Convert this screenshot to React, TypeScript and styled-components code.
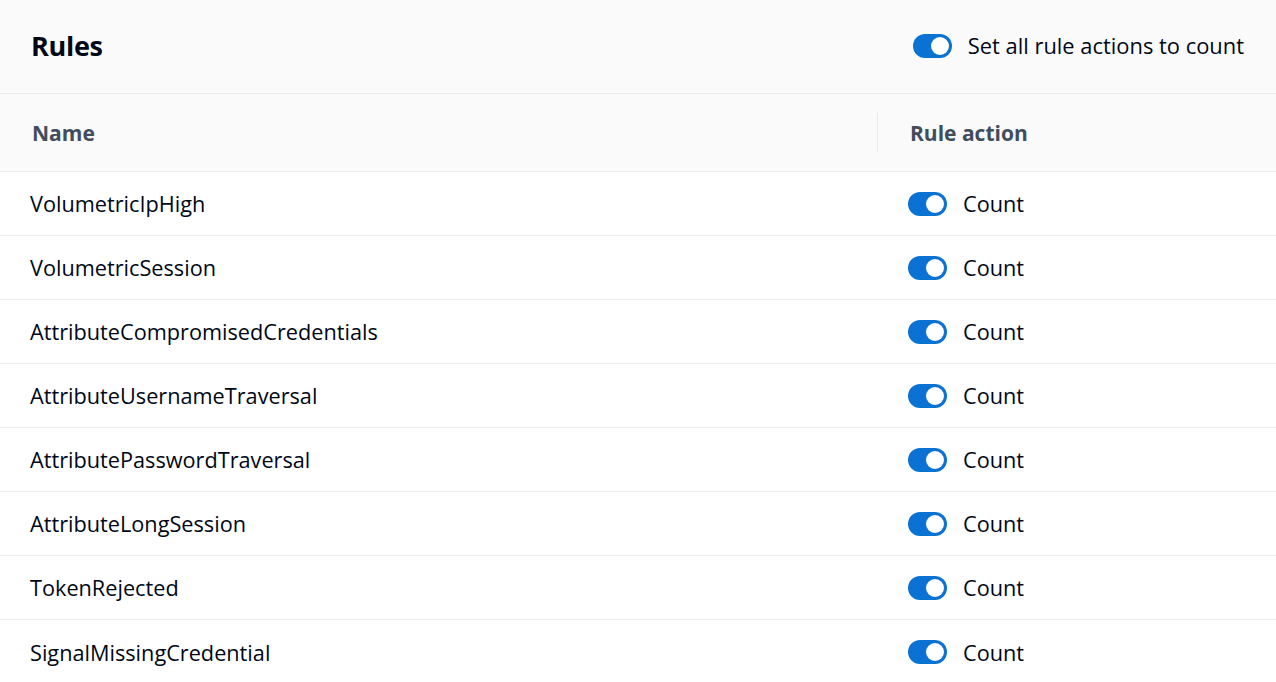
import React from "react";
import styled, { createGlobalStyle } from "styled-components";

const Global = createGlobalStyle`
  html, body { margin: 0; padding: 0; background: #ffffff; }
  body { font-family: "Open Sans", "Noto Sans", sans-serif; color: #000716; }
`;

const Panel = styled.div`
  width: 1276px;
  height: 682px;
  overflow: hidden;
  background: #ffffff;
`;

const Header = styled.div`
  height: 94px;
  box-sizing: border-box;
  background: #fafafa;
  border-bottom: 1px solid #e9ebed;
  display: flex;
  align-items: center;
  justify-content: space-between;
  padding: 0 32px 2px 31px;
`;

const Title = styled.h2`
  margin: 0;
  font-size: 27px;
  font-weight: 700;
  letter-spacing: -0.3px;
  color: #000716;
`;

const ToggleLabel = styled.label<{ $gap?: number; $size?: number }>`
  display: flex;
  align-items: center;
  gap: ${(p) => p.$gap ?? 16}px;
  font-size: ${(p) => p.$size ?? 21.7}px;
  color: #000716;
`;

const Track = styled.span`
  position: relative;
  display: inline-block;
  width: 39px;
  height: 24px;
  border-radius: 12px;
  background: #0972d3;
  flex-shrink: 0;
  &::after {
    content: "";
    position: absolute;
    top: 3px;
    right: 3px;
    width: 18px;
    height: 18px;
    border-radius: 50%;
    background: #ffffff;
  }
`;

const Table = styled.div`
  display: grid;
  grid-template-columns: 877px 1fr;
`;

const HeadCell = styled.div<{ $divider?: boolean }>`
  height: 78px;
  box-sizing: border-box;
  background: #fafafa;
  border-bottom: 1px solid #e9ebed;
  display: flex;
  align-items: center;
  font-size: 21px;
  font-weight: 700;
  color: #414d5c;
  padding-left: ${(p) => (p.$divider ? 33 : 32)}px;
  padding-top: 1px;
  position: relative;
  ${(p) =>
    p.$divider &&
    `&::before {
      content: "";
      position: absolute;
      left: 0;
      top: 19px;
      bottom: 19px;
      width: 1px;
      background: #e9ebed;
    }`}
`;

const Cell = styled.div<{ $last?: boolean; $action?: boolean }>`
  height: 64px;
  box-sizing: border-box;
  border-bottom: ${(p) => (p.$last ? "none" : "1px solid #e9ebed")};
  display: flex;
  align-items: center;
  font-size: 21.7px;
  color: #000716;
  padding-left: ${(p) => (p.$action ? 31 : 30)}px;
`;

const rules = [
  "VolumetricIpHigh",
  "VolumetricSession",
  "AttributeCompromisedCredentials",
  "AttributeUsernameTraversal",
  "AttributePasswordTraversal",
  "AttributeLongSession",
  "TokenRejected",
  "SignalMissingCredential",
];

export default function App() {
  return (
    <Panel>
      <Global />
      <Header>
        <Title>Rules</Title>
        <ToggleLabel $gap={16} $size={21.9}>
          <Track />
          Set all rule actions to count
        </ToggleLabel>
      </Header>
      <Table>
        <HeadCell>Name</HeadCell>
        <HeadCell $divider>Rule action</HeadCell>
        {rules.map((r, i) => (
          <React.Fragment key={r}>
            <Cell $last={i === rules.length - 1}>{r}</Cell>
            <Cell $action $last={i === rules.length - 1}>
              <ToggleLabel $gap={16}>
                <Track />
                Count
              </ToggleLabel>
            </Cell>
          </React.Fragment>
        ))}
      </Table>
    </Panel>
  );
}
